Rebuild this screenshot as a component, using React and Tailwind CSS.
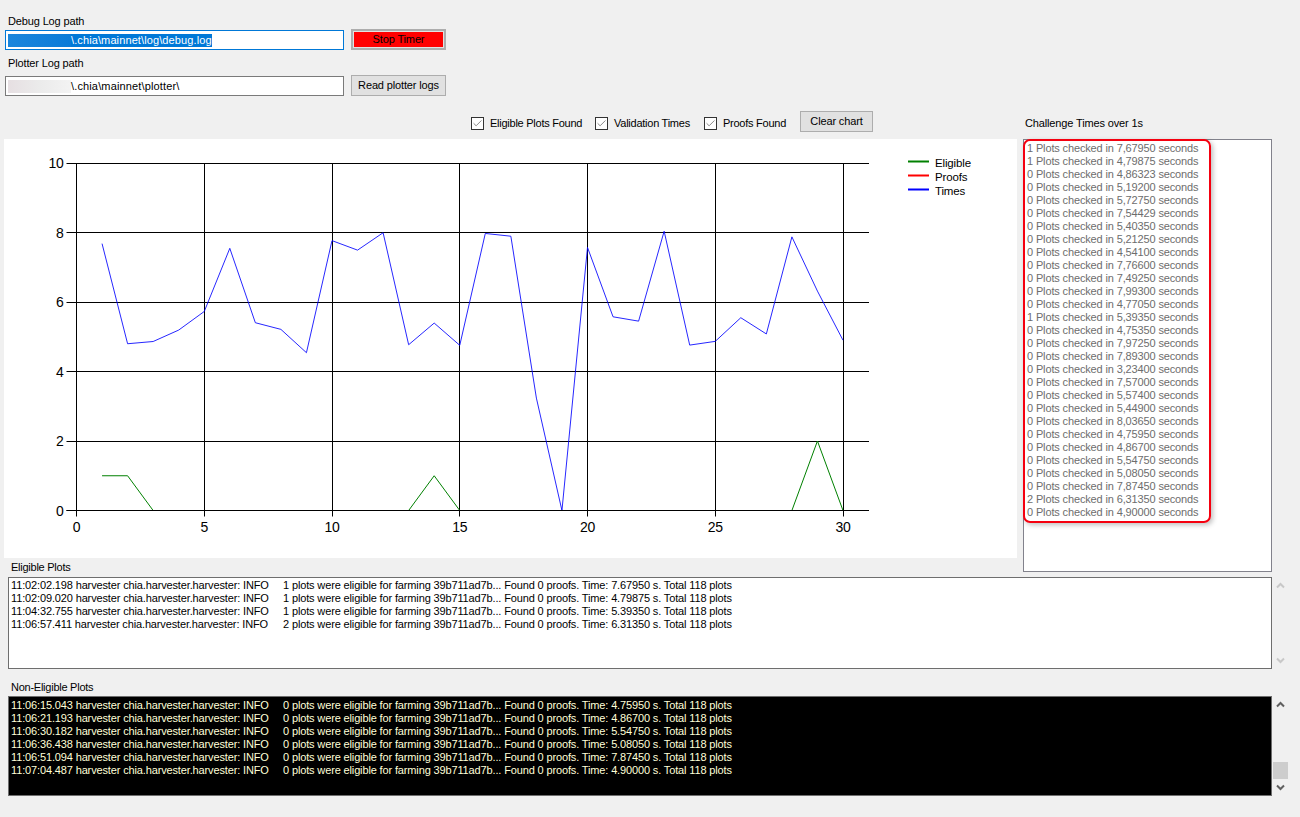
import { Check } from 'lucide-react';

const FONT = "font-['Liberation_Sans',Arial,sans-serif]";

const TIMES = [
  ['1', '7,67950'], ['1', '4,79875'], ['0', '4,86323'], ['0', '5,19200'], ['0', '5,72750'],
  ['0', '7,54429'], ['0', '5,40350'], ['0', '5,21250'], ['0', '4,54100'], ['0', '7,76600'],
  ['0', '7,49250'], ['0', '7,99300'], ['0', '4,77050'], ['1', '5,39350'], ['0', '4,75350'],
  ['0', '7,97250'], ['0', '7,89300'], ['0', '3,23400'], ['0', '7,57000'], ['0', '5,57400'],
  ['0', '5,44900'], ['0', '8,03650'], ['0', '4,75950'], ['0', '4,86700'], ['0', '5,54750'],
  ['0', '5,08050'], ['0', '7,87450'], ['2', '6,31350'], ['0', '4,90000'],
];

const CHART_TIMES = [
  7.6795, 4.79875, 4.86323, 5.192, 5.7275, 7.54429, 5.4035, 5.2125, 4.541, 7.766,
  7.4925, 7.993, 4.7705, 5.3935, 4.7535, 7.9725, 7.893, 3.234, 0, 7.57,
  5.574, 5.449, 8.0365, 4.7595, 4.867, 5.5475, 5.0805, 7.8745, 6.3135, 4.9,
];

const ELIGIBLE_LOG = [
  ['11:02:02.198', '1', '7.67950'],
  ['11:02:09.020', '1', '4.79875'],
  ['11:04:32.755', '1', '5.39350'],
  ['11:06:57.411', '2', '6.31350'],
];

const NON_ELIGIBLE_LOG = [
  ['11:06:15.043', '0', '4.75950'],
  ['11:06:21.193', '0', '4.86700'],
  ['11:06:30.182', '0', '5.54750'],
  ['11:06:36.438', '0', '5.08050'],
  ['11:06:51.094', '0', '7.87450'],
  ['11:07:04.487', '0', '4.90000'],
];

const px = (x) => 76.5 + x * 25.55;
const py = (y) => 510.5 - y * 34.75 - 139;
const linePoints = (values) => values.map((v, i) => `${px(i + 1)},${py(v)}`).join(' ');

function Chart() {
  const eligible = CHART_TIMES.map(() => 0);
  eligible[0] = 1;
  eligible[1] = 1;
  eligible[13] = 1;
  eligible[28] = 2;
  const xTicks = [0, 5, 10, 15, 20, 25, 30];
  const yTicks = [0, 2, 4, 6, 8, 10];

  return (
    <svg width="1013" height="419" viewBox="4 0 1013 419" className="block bg-white">
      {xTicks.map((t) => (
        <g key={t}>
          <line x1={Math.floor(px(t)) + 0.5} x2={Math.floor(px(t)) + 0.5} y1={py(10)} y2={py(0) + 6} stroke="#000" />
          <text x={px(t)} y={py(0) + 21} textAnchor="middle" fontSize="14" letterSpacing="-0.3" fill="#000">{t}</text>
        </g>
      ))}
      {yTicks.map((t) => (
        <g key={t}>
          <line x1={px(0) - 10} x2="869" y1={Math.floor(py(t)) + 0.5} y2={Math.floor(py(t)) + 0.5} stroke="#000" />
          <text x={px(0) - 13} y={py(t) + 5} textAnchor="end" fontSize="14" letterSpacing="-0.3" fill="#000">{t}</text>
        </g>
      ))}
      <polyline points={linePoints(CHART_TIMES.map(() => 0))} fill="none" stroke="#ff0000" strokeOpacity="0.3" />
      <polyline points={linePoints(eligible)} fill="none" stroke="#008000" />
      <polyline points={linePoints(CHART_TIMES)} fill="none" stroke="#0000ff" strokeOpacity="0.85" />
      {/* the zero line stays black over the series that sit on it */}
      <line x1={px(0) - 10} x2="869" y1={Math.floor(py(0)) + 0.5} y2={Math.floor(py(0)) + 0.5} stroke="#000" />
      {[['Eligible', '#008000', 23], ['Proofs', '#ff0000', 37], ['Times', '#0000ff', 51]].map(([label, color, y]) => (
        <g key={label}>
          <line x1="908" x2="929" y1={y - 0.5} y2={y - 0.5} stroke={color} strokeWidth="2" />
          <text x="935" y={y + 5} fontSize="11.5" fill="#000">{label}</text>
        </g>
      ))}
    </svg>
  );
}

function CheckItem({ label, className }) {
  return (
    <label className={`mt-[3px] flex items-center ${className}`}>
      <span className="flex h-[13px] w-[13px] shrink-0 items-center justify-center border border-[#333] bg-white">
        <Check size={11} strokeWidth={1.25} className="text-[#333]" />
      </span>
      <span className="ml-[6px] tracking-[-0.25px]">{label}</span>
    </label>
  );
}

function LogLine({ time, count, secs }) {
  return (
    <div className="flex h-[13px] items-center whitespace-nowrap">
      <span className="w-[272px] shrink-0">{time} harvester chia.harvester.harvester: INFO</span>
      <span>{count} plots were eligible for farming 39b711ad7b... Found 0 proofs. Time: {secs} s. Total 118 plots</span>
    </div>
  );
}

function ScrollArrows({ active, thumb }) {
  const color = active ? '#606060' : '#c8c8c8';
  return (
    <div className="relative flex w-[16px] flex-col items-center justify-between self-stretch py-[5px]">
      <svg width="9" height="7" viewBox="0 0 9 7"><path d="M1 5.5 4.5 2 8 5.5" fill="none" stroke={color} strokeWidth="2" /></svg>
      {thumb && <div className="absolute bottom-[17px] left-[1px] h-[17px] w-[15px] bg-[#cdcdcd]" />}
      <svg width="9" height="7" viewBox="0 0 9 7"><path d="M1 1.5 4.5 5 8 1.5" fill="none" stroke={color} strokeWidth="2" /></svg>
    </div>
  );
}

export default function App() {
  return (
    <div className={`h-[817px] w-[1300px] overflow-hidden bg-[#f0f0f0] text-[11px] leading-[13px] tracking-[-0.14px] text-black ${FONT}`}>
      {/* path fields */}
      <div className="pl-[5px] pt-[15px]">
        <div className="pl-[3px]">Debug Log path</div>
        <div className="mt-[1px] flex items-start">
          <div className="mt-[1px] flex h-[20px] w-[339px] items-center border border-[#0078d7] bg-white pl-[2px]">
            <span className="flex h-[13px] items-center bg-[#0078d7] text-white">
              <span className="h-[13px] w-[63px] bg-gradient-to-r from-[#1b86dc] to-[#0a7bd8]" />
              <span className="tracking-[0.11px]">\.chia\mainnet\log\debug.log</span>
            </span>
          </div>
          <button className="ml-[7px] h-[21px] w-[95px] border-2 border-[#adadad] bg-[#e1e1e1] p-[1px]">
            <span className="flex h-full w-full items-center justify-center bg-[#ff0000]">Stop Timer</span>
          </button>
        </div>
        <div className="mt-[7px] pl-[3px]">Plotter Log path</div>
        <div className="mt-[5px] flex items-start">
          <div className="mt-[1px] flex h-[20px] w-[339px] items-center border border-[#7a7a7a] bg-white pl-[2px]">
            <span className="h-[13px] w-[63px] bg-gradient-to-r from-[#e6dfe2] via-[#ebebeb] to-[#f3f3f3]" />
            <span className="tracking-[0.14px]">\.chia\mainnet\plotter\</span>
          </div>
          <button className="ml-[7px] h-[21px] w-[95px] border border-[#adadad] bg-[#e1e1e1]">Read plotter logs</button>
        </div>
      </div>

      {/* chart controls */}
      <div className="mt-[15px] flex h-[21px] items-center pl-[471px]">
        <CheckItem label="Eligible Plots Found" className="w-[124px]" />
        <CheckItem label="Validation Times" className="w-[109px]" />
        <CheckItem label="Proofs Found" className="w-[96px]" />
        <button className="h-[21px] w-[73px] border border-[#adadad] bg-[#e1e1e1]">Clear chart</button>
        <span className="ml-[152px] mt-[3px]">Challenge Times over 1s</span>
      </div>

      {/* chart and challenge times */}
      <div className="mt-[7px] flex items-start pl-[4px]">
        <div className="w-[1013px]">
          <Chart />
          <div className="mt-[3px] pl-[7px] tracking-[-0.25px]">Eligible Plots</div>
        </div>
        <div className="relative ml-[6px] h-[433px] w-[249px] border border-[#82828c] bg-white pl-[3px] pt-[2px] text-[#6d6d6d]">
          {TIMES.map(([count, secs], i) => (
            <div key={i} className="h-[13px] whitespace-nowrap">{count} Plots checked in {secs} seconds</div>
          ))}
          <div className="absolute left-[-1px] top-[-1px] h-[384px] w-[188px] rounded-[7px] border-2 border-[#f5000f] shadow-[2px_2px_5px_rgba(0,0,0,0.25)]" />
        </div>
      </div>

      {/* eligible log */}
      <div className="mt-[3px] flex pl-[8px]">
        <div className="h-[92px] w-[1264px] overflow-hidden border border-[#6e6e6e] bg-white pl-[2px] pt-[1px]">
          {ELIGIBLE_LOG.map(([time, count, secs]) => (
            <LogLine key={time} time={time} count={count} secs={secs} />
          ))}
        </div>
        <ScrollArrows />
      </div>

      {/* non-eligible log */}
      <div className="mt-[12px] pl-[11px] tracking-[-0.25px]">Non-Eligible Plots</div>
      <div className="mt-[2px] flex pl-[8px]">
        <div className="h-[100px] w-[1264px] overflow-hidden border border-[#6e6e6e] bg-black pl-[2px] pt-[2px] text-[#ffffd8]">
          {NON_ELIGIBLE_LOG.map(([time, count, secs]) => (
            <LogLine key={time} time={time} count={count} secs={secs} />
          ))}
        </div>
        <ScrollArrows active thumb />
      </div>
    </div>
  );
}
